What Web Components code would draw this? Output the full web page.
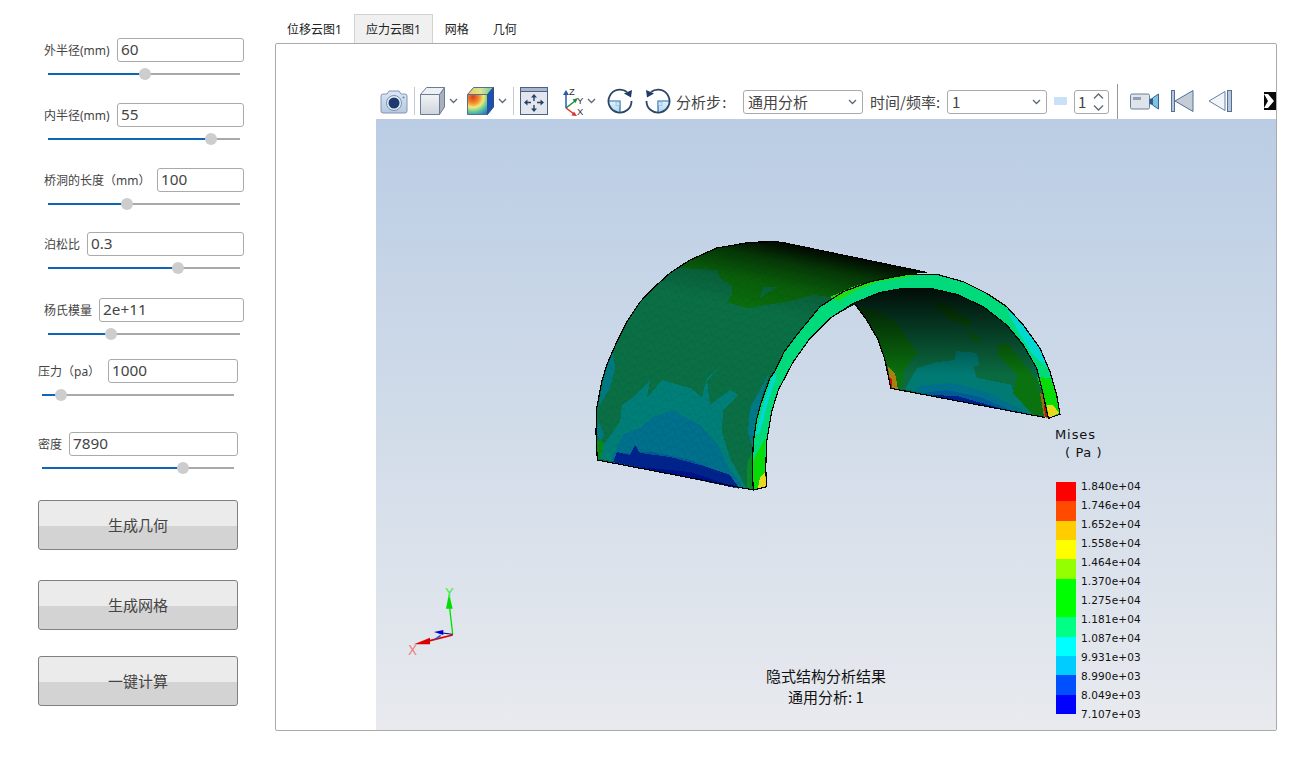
<!DOCTYPE html>
<html lang="zh">
<head>
<meta charset="utf-8">
<title>隐式结构分析</title>
<style>
  html, body { margin: 0; height: 100%; background: #fff; }
  body { font-family: "Noto Sans", "Noto Sans CJK SC", sans-serif; overflow: hidden; }
</style>
</head>
<body>
<app-shell>
  <param-slider style="margin-top:38px;margin-left:44px" label="外半径(mm)" label-width="73" value="60" pos="50.5"></param-slider>
  <param-slider style="margin-top:28px;margin-left:44px" label="内半径(mm)" label-width="73" value="55" pos="85"></param-slider>
  <param-slider style="margin-top:28px;margin-left:44px" label="桥洞的长度（mm）" label-width="113" value="100" pos="41"></param-slider>
  <param-slider style="margin-top:27px;margin-left:44px" label="泊松比" label-width="43" value="0.3" pos="67.7"></param-slider>
  <param-slider style="margin-top:29px;margin-left:44px" label="杨氏模量" label-width="55" value="2e+11" pos="32.8"></param-slider>
  <param-slider style="margin-top:24px;margin-left:38px" label="压力（pa）" label-width="70" value="1000" pos="9.9"></param-slider>
  <param-slider style="margin-top:36px;margin-left:38px" label="密度" label-width="31" value="7890" pos="73.4"></param-slider>
  <action-button style="margin-top:31px">生成几何</action-button>
  <action-button style="margin-top:30px">生成网格</action-button>
  <action-button style="margin-top:26px">一键计算</action-button>
</app-shell>

<script>
// Page frame: parameter column on the left, tabbed result view on the right.
class AppShell extends HTMLElement {
  constructor() {
    super();
    this.attachShadow({ mode: 'open' });
    this.shadowRoot.innerHTML = `
      <style>
        :host { display: flex; width: 1312px; height: 761px; }
        .side { width: 275px; flex: none; display: flex; flex-direction: column; align-items: flex-start; }
        .main { width: 1002px; flex: none; padding-top: 14px; display: flex; flex-direction: column; height: 717px; }
      </style>
      <div class="side"><slot></slot></div>
      <div class="main">
        <tab-bar></tab-bar>
        <result-panel></result-panel>
      </div>
    `;
  }
}

// One labelled number field with the slider below it.
class ParamSlider extends HTMLElement {
  constructor() {
    super();
    this.attachShadow({ mode: 'open' });
  }

  connectedCallback() {
    const label = this.getAttribute('label');
    const value = this.getAttribute('value');
    const pos = this.getAttribute('pos');
    const lw = this.getAttribute('label-width');
    this.shadowRoot.innerHTML = `
      <style>
        :host { display: block; width: 200px; flex: none; color: #444; }
        .row { display: flex; align-items: center; height: 24px; }
        label { flex: none; width: ${lw}px; font-size: 12px; white-space: nowrap; }
        input {
          flex: 1; min-width: 0; box-sizing: border-box; height: 24px; margin: 0;
          border: 1px solid #aaa; border-radius: 3px; padding: 0 3px 2px;
          font: 15.3px "Noto Sans", "Noto Sans CJK SC", sans-serif; color: #444; background: #fff;
        }
        .track { position: relative; height: 2px; margin: 11px 4px 0; background: #a9a9a9; }
        .fill { height: 2px; background: #0f66b8; width: ${pos}%; }
        .thumb {
          position: absolute; left: ${pos}%; top: -5px; width: 12px; height: 12px; margin-left: -6px;
          border-radius: 50%; background: #cdcdcd;
        }
      </style>
      <div class="row"><label>${label}</label><input type="text" value="${value}"></div>
      <div class="track"><div class="fill"></div><div class="thumb"></div></div>
    `;
  }
}

class ActionButton extends HTMLElement {
  constructor() {
    super();
    this.attachShadow({ mode: 'open' });
    this.shadowRoot.innerHTML = `
      <style>
        :host { display: block; flex: none; margin-left: 38px; width: 200px; }
        button {
          display: block; box-sizing: border-box; width: 200px; height: 50px; padding: 0 0 2px;
          border: 1px solid #808080; border-radius: 3px; color: #444;
          font: 15px "Noto Sans CJK SC", "Noto Sans", sans-serif;
          background: linear-gradient(#ebebeb 0, #ebebeb 52%, #d3d3d3 52%, #d3d3d3 100%);
        }
      </style>
      <button><slot></slot></button>
    `;
  }
}

class TabBar extends HTMLElement {
  constructor() {
    super();
    this.attachShadow({ mode: 'open' });
    this.tabs = ['位移云图1', '应力云图1', '网格', '几何'];
    this.shadowRoot.innerHTML = `
      <style>
        :host { display: flex; height: 29px; flex: none; font-size: 12px; color: #222; }
        .tab {
          box-sizing: border-box; height: 30px; padding: 0 11px; line-height: 29px;
          border: 1px solid transparent; white-space: nowrap;
        }
        .tab.on { background: #f0f0f0; border-color: #d2d2d2; border-bottom-color: #aaa; }
      </style>
      ${this.tabs.map((t, i) => `<div class="tab${i === 1 ? ' on' : ''}">${t}</div>`).join('')}
    `;
  }
}

class ResultPanel extends HTMLElement {
  constructor() {
    super();
    this.attachShadow({ mode: 'open' });
    this.shadowRoot.innerHTML = `
      <style>
        :host {
          display: flex; flex-direction: column; flex: 1; min-height: 0; box-sizing: border-box;
          border: 1px solid #aaa; border-radius: 2px; padding: 39px 0 0 100px; background: #fff; overflow: hidden;
        }
        model-view { flex: 1; min-height: 0; }
      </style>
      <view-toolbar></view-toolbar>
      <model-view></model-view>
    `;
  }
}

// Toolbar strip above the 3D view.  It runs past the right edge and is clipped there.
class ViewToolbar extends HTMLElement {
  constructor() {
    super();
    this.attachShadow({ mode: 'open' });
    const chev = (ml) => `<svg style="margin-left:${ml}px" width="9" height="6" viewBox="0 0 9 6"><path d="M1 1l3.5 3.5L8 1" fill="none" stroke="#5a6a7a" stroke-width="1.3"/></svg>`;
    this.shadowRoot.innerHTML = `
      <style>
        :host {
          display: flex; align-items: center; flex: none; height: 36px; width: 900px; overflow: hidden;
          font: 15px "Noto Sans CJK SC", "Noto Sans", sans-serif; color: #444;
        }
        svg { flex: none; display: block; }
        .sep { flex: none; width: 1px; height: 28px; background: #c4ccd4; }
        .sep.tall { height: 35px; background: #999; }
        .txt { flex: none; white-space: nowrap; }
        .sel {
          flex: none; box-sizing: border-box; height: 24px; margin-top: 1px; border: 1px solid #aaa; border-radius: 3px;
          display: flex; align-items: center; justify-content: space-between; padding: 0 5px 0 4px; background: #fff;
        }
        .tiny { flex: none; width: 13px; height: 8px; background: #c8e0f8; border-radius: 1px; }
      </style>
      <svg style="margin-left:4px" width="28" height="25" viewBox="0 0 28 25">
        <defs><linearGradient id="cam" x1="0" y1="0" x2="0" y2="1"><stop offset="0" stop-color="#dce7f4"/><stop offset="1" stop-color="#b4c9e2"/></linearGradient></defs>
        <path d="M3 5h4l2-3h10l2 3h4a2 2 0 0 1 2 2v15a2 2 0 0 1-2 2H3a2 2 0 0 1-2-2V7a2 2 0 0 1 2-2z" fill="url(#cam)" stroke="#8496b0"/>
        <circle cx="14" cy="14" r="7.5" fill="#e8eff7" stroke="#7a90ae"/>
        <circle cx="14" cy="14" r="5.5" fill="#1c3a70"/>
        <circle cx="23.500" cy="8.500" r="1" fill="#6e86a6"/>
      </svg>
      <div class="sep" style="margin-left:6px"></div>
      <svg style="margin-left:5px" width="25" height="28" viewBox="0 0 25 28">
        <defs><linearGradient id="cf" x1="0" y1="0" x2="0" y2="1"><stop offset="0" stop-color="#f2f3f6"/><stop offset="1" stop-color="#cfd4dc"/></linearGradient></defs>
        <path d="M.5 7.500h19v20H.5z" fill="url(#cf)" stroke="#6c7c96"/>
        <path d="M19.500 7.500l5-7v19.500l-5 7.500z" fill="#a8b0bc" stroke="#6c7c96"/>
        <path d="M.5 7.500l6-7h18l-5 7z" fill="#eef0f3" stroke="#6c7c96"/>
      </svg>
      ${chev(4)}
      <svg style="margin-left:9px" width="27" height="28" viewBox="0 0 27 28">
        <defs>
          <radialGradient id="rb" gradientUnits="userSpaceOnUse" cx="6" cy="10" r="21"><stop offset="0" stop-color="#d93a20"/><stop offset="0.3" stop-color="#f0902c"/><stop offset="0.5" stop-color="#f2e878"/><stop offset="0.72" stop-color="#58c8a0"/><stop offset="1" stop-color="#2a70c8"/></radialGradient>
          <linearGradient id="rt" x1="0" y1="0" x2="1" y2="0"><stop offset="0" stop-color="#f0c060"/><stop offset="0.5" stop-color="#d8e890"/><stop offset="1" stop-color="#60c8a0"/></linearGradient>
        </defs>
        <path d="M.5 7.500h20v20H.5z" fill="url(#rb)" stroke="#5a6c90"/>
        <path d="M.5 7.500l6-7h20l-6 7z" fill="url(#rt)" stroke="#5a6c90"/>
        <path d="M20.500 7.500l6-7v19.500l-6 7.500z" fill="#1c50b4" stroke="#33507c"/>
      </svg>
      ${chev(4)}
      <div class="sep" style="margin-left:6px"></div>
      <svg style="margin-left:6px" width="28" height="28" viewBox="0 0 28 28">
        <rect x="0.500" y="0.500" width="27" height="27" fill="#e3e6ec" stroke="#4c6088"/>
        <rect x="0.500" y="0.500" width="27" height="4" fill="#a9b6cc" stroke="#4c6088"/>
        <g fill="#24406c" stroke="#24406c" stroke-width="1.400">
          <path d="M14 10v4M14 18v4M7 15.500h4M17 15.500h4" fill="none"/>
          <path d="M14 7l-3 3.500h6zM14 25l-3-3.500h6zM4 15.500l3.500-3v6zM24 15.500l-3.500-3v6z" stroke="none"/>
        </g>
      </svg>
      <svg style="margin-left:13px" width="24" height="30" viewBox="0 0 24 30">
        <path d="M5 22V8" stroke="#2a5aa8" stroke-width="1.500"/><path d="M5 4l-3 5h6z" fill="#2a5aa8"/>
        <path d="M5 22l9-7" stroke="#1c8a3c" stroke-width="1.500"/><path d="M17 12l-5.500 1.500 3 3.500z" fill="#1c8a3c"/>
        <path d="M5 22l8 6" stroke="#e03030" stroke-width="1.500"/><path d="M16 30l-5.500-.5 2.500-4z" fill="#e03030"/>
        <text x="8" y="9" font-size="9.500" font-family="Liberation Sans" fill="#333">Z</text>
        <text x="16" y="17.500" font-size="9.500" font-family="Liberation Sans" fill="#333">Y</text>
        <text x="16" y="28.500" font-size="9.500" font-family="Liberation Sans" fill="#333">X</text>
      </svg>
      ${chev(2)}
      <svg style="margin-left:11px" width="26" height="26" viewBox="0 0 26 26">
        <defs><linearGradient id="q" x1="0" y1="0" x2="0" y2="1"><stop offset="0" stop-color="#e6f3fb"/><stop offset="1" stop-color="#a8d6f2"/></linearGradient></defs>
        <path d="M1.500 13H13v11.500A11.500 11.500 0 0 1 1.500 13z" fill="url(#q)"/>
        <path d="M1.500 13H13v11.500" fill="none" stroke="#2a6ab0" stroke-width="1.200"/>
        <rect x="9" y="14" width="3.500" height="3.500" fill="#d4e8f6" stroke="#7cb0da" stroke-width=".6"/>
        <path d="M20 4A11.500 11.500 0 1 0 24.500 13" fill="none" stroke="#2c4466" stroke-width="1.800"/>
        <path d="M25 2l-1 7.500-7-4z" fill="#1f3a66"/>
      </svg>
      <svg style="margin-left:12px" width="26" height="26" viewBox="0 0 26 26">
        <path d="M24.500 13H13v11.500A11.500 11.500 0 0 0 24.500 13z" fill="url(#q)"/>
        <path d="M24.500 13H13v11.500" fill="none" stroke="#2a6ab0" stroke-width="1.200"/>
        <rect x="13.500" y="14" width="3.500" height="3.500" fill="#d4e8f6" stroke="#7cb0da" stroke-width=".6"/>
        <path d="M6 4A11.500 11.500 0 1 1 1.500 13" fill="none" stroke="#2c4466" stroke-width="1.800"/>
        <path d="M1 2l1 7.500 7-4z" fill="#1f3a66"/>
      </svg>
      <div class="txt" style="margin-left:5px;width:51px;word-spacing:-2px">分析步 :</div>
      <div class="sel" style="margin-left:16px;width:120px"><span>通用分析</span>${chev(0)}</div>
      <div class="txt" style="margin-left:7px;width:71px">时间/频率:</div>
      <div class="sel" style="margin-left:6px;width:100px"><span>1</span>${chev(0)}</div>
      <div class="tiny" style="margin-left:7px"></div>
      <div class="sel" style="margin-left:7px;width:35px;padding:0 3px 0 3px"><span>1</span>
        <svg width="13" height="20" viewBox="0 0 13 20"><path d="M2 6.500l4.500-4.500L11 6.500M2 13.500L6.500 18l4.500-4.500" fill="none" stroke="#5a6a7a" stroke-width="1.300"/></svg>
      </div>
      <div class="sep tall" style="margin-left:8px"></div>
      <svg style="margin-left:12px" width="29" height="17" viewBox="0 0 29 17">
        <rect x="0.500" y="1" width="19" height="15" rx="1.500" fill="#dfe3ea" stroke="#66809f"/>
        <rect x="3" y="4" width="8" height="3" fill="#93a0b2"/>
        <path d="M19.500 6l3-1v7l-3-1z" fill="#2c5c8c"/>
        <path d="M22.500 5l6-4v15l-6-4z" fill="#7cc4e4" stroke="#33628e"/>
      </svg>
      <svg style="margin-left:12px" width="23" height="22" viewBox="0 0 23 22">
        <rect x="0.500" y="0.500" width="3" height="21" fill="#b8c6d8" stroke="#54709a"/>
        <path d="M22 .5v21L4 11z" fill="#c4ccd6" stroke="#54709a"/>
      </svg>
      <svg style="margin-left:14px" width="24" height="22" viewBox="0 0 24 22">
        <path d="M17 1.500v19L1 11z" fill="#f2f4f7" stroke="#6480a4"/>
        <rect x="19.500" y="0.500" width="4" height="21" fill="#b8c6d8" stroke="#54709a"/>
      </svg>
      <svg style="margin-left:32px;filter:blur(.6px)" width="12" height="18" viewBox="0 0 12 18">
        <path d="M0 0h12v18H0z" fill="#0a0a0a"/>
        <path d="M0 2h4l6 7-6 7H0l4-7z" fill="#fff"/>
      </svg>
    `;
  }
}

// Colour scale of the stress plot.
class ColorLegend extends HTMLElement {
  constructor() {
    super();
    this.attachShadow({ mode: 'open' });
    const bands = [
      ['#ff0000', 1], ['#ff4a00', 1], ['#ffcc00', 1], ['#ffff00', 1], ['#94ff00', 1],
      ['#00ff00', 2], ['#00ff84', 1], ['#00ffff', 1], ['#00ccff', 1], ['#0050ff', 1], ['#0000ff', 1],
    ];
    const labels = ['1.840e+04', '1.746e+04', '1.652e+04', '1.558e+04', '1.464e+04', '1.370e+04', '1.275e+04',
      '1.181e+04', '1.087e+04', '9.931e+03', '8.990e+03', '8.049e+03', '7.107e+03'];
    this.shadowRoot.innerHTML = `
      <style>
        :host { position: absolute; left: 679px; top: 307px; width: 110px; color: #111; font-family: "DejaVu Sans", sans-serif; }
        .name { font-size: 13px; line-height: 18px; letter-spacing: .9px; }
        .unit { font-size: 13px; line-height: 18px; margin-left: 10px; letter-spacing: .6px; }
        .scale { display: flex; margin-top: 20px; margin-left: 1px; }
        .bands { width: 20px; height: 232px; display: flex; flex-direction: column; flex: none; }
        .labels { margin: -5px 0 0 5px; font-size: 10.500px; letter-spacing: .12px; }
        .labels div { height: 19px; line-height: 19px; white-space: nowrap; }
      </style>
      <div class="name">Mises</div>
      <div class="unit">( Pa )</div>
      <div class="scale">
        <div class="bands">${bands.map(([c, n]) => `<div style="background:${c};flex:${n}"></div>`).join('')}</div>
        <div class="labels">${labels.map((l) => `<div>${l}</div>`).join('')}</div>
      </div>
    `;
  }
}

// 3D viewport: the deformed arch is drawn as flat contour polygons traced from the
// plot, in page coordinates (the svg viewBox starts at the viewport's corner).
class ModelView extends HTMLElement {
  constructor() {
    super();
    this.attachShadow({ mode: 'open' });
    const sil = '597.3 460 596 432 596.7 408 601.7 382 606.7 365 616.7 342 626.7 322 640 302 653.3 288 670 273 690 260 716.7 248 750 242.3 776.7 241.7 785 243 927 272.5';
    const outerLeft = '753.3 490 752.3 468 753.3 442 756.5 420 761 403 770 378 775 371 784 352 796.7 335 820 306.7 843.3 291.7 870 281.7 906.7 274.5';
    const outerRight = '936.7 274.3 963.3 281.7 986.7 293.3 1006.7 306.7 1023.3 325 1040 348.3 1050 371.7 1056.7 395 1060 414.3';
    const inner = '1048.3 418.3 1043.3 395 1036.7 368.3 1023.3 345 1006.7 325 983.3 306.7 956.7 294.3 930 288.3 903.3 288.3 880 292.5 853.3 303.3 830 318.3 810 338.3 793.3 361.7 778.3 390 771.7 411.7 766.7 441.7 765.7 468 766.7 486.7';
    const reversed = (s) => {
      const n = s.split(' ');
      const out = [];
      for (let i = n.length - 2; i >= 0; i -= 2) out.push(n[i], n[i + 1]);
      return out.join(' ');
    };
    const skin = `M${sil} L${reversed(outerLeft)}z`;
    const ring = `M${outerLeft} ${outerRight} L${inner}z`;
    const backEdge = '855 304.3 866.7 320 878.3 340 885 360 890.7 388.3 1045 417.5';
    const back = `M${backEdge} L${inner.split(' ').slice(2, 24).join(' ')}z`;
    this.shadowRoot.innerHTML = `
      <style>
        :host { display: block; position: relative; overflow: hidden; background: linear-gradient(#bacde4, #e8eaee); }
        svg { position: absolute; left: 0; top: 0; display: block; }
        .cap {
          position: absolute; left: 350px; width: 200px; top: 546px; text-align: center; color: #111;
          font: 15px/21px "Noto Sans CJK SC", "Noto Sans", sans-serif;
        }
      </style>
      <svg width="900" height="611" viewBox="376 119 900 611">
        <defs>
          <linearGradient id="shO" gradientUnits="userSpaceOnUse" x1="852" y1="257" x2="838" y2="327">
            <stop offset="0" stop-color="#000" stop-opacity=".92"/>
            <stop offset=".25" stop-color="#000" stop-opacity=".5"/>
            <stop offset=".6" stop-color="#000" stop-opacity=".15"/>
            <stop offset="1" stop-color="#000" stop-opacity="0"/>
          </linearGradient>
          <linearGradient id="shI" gradientUnits="userSpaceOnUse" x1="950" y1="288" x2="950" y2="375">
            <stop offset="0" stop-color="#000" stop-opacity=".88"/>
            <stop offset="1" stop-color="#000" stop-opacity="0"/>
          </linearGradient>
          <pattern id="mesh" patternUnits="userSpaceOnUse" width="13" height="9" patternTransform="rotate(12)">
            <path d="M0 9L6.500 0L13 9M0 0h13" fill="none" stroke="#000" stroke-opacity=".08" stroke-width=".8"/>
          </pattern>
        </defs>
        <g shape-rendering="crispEdges">
          <!-- far half, seen through the arch -->
          <path d="${back}" fill="#0a6a40"/>
          <path d="M858 307L880 312L897 323L917 353L903 372L903 387L891 388L887 368L878 340z" fill="#0a720e"/>
          <path d="M997 345L1007 343L1023 362L1037 382L1045 415L1033 415L1013 395L1017 375L998 355z" fill="#0a720e"/>
          <path d="M932 302L947 305L973 322L967 327L947 318z" fill="#0a720e"/>
          <path d="M968 332L980 338L980 343L970 338z" fill="#0a720e"/>
          <path d="M905 389L917 368L937 362L955 360L956 351L977 353L979 365L973 367L977 378L1012 385L1013 393L1033 415z" fill="#007a72"/>
          <path d="M912 391L923 385L953 383L990 393L1027 413z" fill="#00708a"/>
          <path d="M920 393L947 390L980 397L1013 411z" fill="#005a96"/>
          <path d="M930 395L957 396L1003 409z" fill="#00208c"/>
          <path d="${back}" fill="url(#shI)"/>
          <path d="M888 367L895 373L898 389.500L891 388z" fill="#a88010"/>
          <path d="M889 377L892 380L892 388L891 388z" fill="#c01010"/>
          <path d="M1040 393L1045 395L1048 418L1044 417z" fill="#8c7010"/>
          <path d="M1044 405L1046 407L1047 417L1045 417z" fill="#c01010"/>

          <!-- outer skin of the shell -->
          <path d="${skin}" fill="#0a6f44"/>
          <path d="M680 268L717 270L720 278L732 285L732 295L727 302L747 308L786 302L813 295L837 298L870 281.700L906.700 274.500L927 272.500L785 243L750 242.300L716.700 248L690 260z" fill="#0a6e0c"/>
          <path d="M763 287L777 287L760 298z" fill="#0a6f44"/>
          <path d="M597 458L598 440L605 443L620 422L622 405L632 398L650 380L647 398L662 380L690 388L702 397L707 378L717 370L707 380L710 405L730 390L738 395L723 410L722 432L730 458L747 489z" fill="#007f78"/>
          <path d="M598 408L603 382L607 367L613 353L615 368L610 388z" fill="#007a82"/>
          <path d="M598 420L604 435L600 442L597 432z" fill="#007a82"/>
          <path d="M748 432L750 408L770 372L763 392L755 422L753 448z" fill="#007a88"/>
          <path d="M610 462L623 435L640 428L653 417L672 410L700 425L718 445L730 470L745 489z" fill="#00708c"/>
          <path d="M613 462L620 453L650 452L690 460L723 473L740 489z" fill="#005a96"/>
          <path d="M613 462L617 452L630 455L635 445L640 453L670 457L700 465L730 475L739 488z" fill="#00248c"/>
          <path d="M640 467L690 472L723 483L735 488z" fill="#00108a"/>
          <path d="M597.300 460L596.500 440L604 442L602 455z" fill="#0a8a18"/>
          <path d="M747 464L752 452L752.300 490L747 489z" fill="#0a8a28"/>
          <path d="${skin}" fill="url(#mesh)"/>
          <path d="${skin}" fill="url(#shO)"/>

          <!-- front ring -->
          <path d="${ring}" fill="#00da7a"/>
          <path d="M830 297L850 288L870 281L907 274.500L927 274L907 277L877 282L857 290L838 301z" fill="#20dc10"/>
          <path d="M755.700 435L763 405L773 375L777 375L768 402L760 432z" fill="#00d8d0"/>
          <path d="M1007 310L1023 325L1040 348L1047 367L1033 355L1020 335z" fill="#00d8d0"/>
          <path d="M753.300 490L752.500 462L765 438L765.700 468L766.700 486.700z" fill="#08dc08"/>
          <path d="M1037 377L1050 378L1056.700 395L1060 414.300L1048.300 418.300L1043.300 395z" fill="#08dc08"/>
          <path d="M758 488L760 477L765 473L766.700 486.700z" fill="#e8d820"/>
          <path d="M1047 405L1053 405L1059 413L1048.300 418.300z" fill="#e8d820"/>

          <!-- edges -->
          <g fill="none" stroke="#000" stroke-width="1.200" stroke-linejoin="round">
            <path d="M753.300 490L${sil}"/>
            <path d="${ring}"/>
            <path d="M${backEdge}"/>
          </g>
        </g>
        <!-- triad -->
        <g transform="translate(390 570) scale(.33333)">
          <path d="M188 192L178 105" stroke="#00e000" stroke-width="4"/>
          <path d="M177 70L168 116L188 116z" fill="#00dd00"/>
          <path d="M188 195L120 212" stroke="#e00000" stroke-width="5"/>
          <path d="M72 223L120 203L120 223z" fill="#dd0000"/>
          <path d="M188 193L150 188" stroke="#000080" stroke-width="3"/>
          <path d="M132 186L160 180L160 195z" fill="#0000cc"/>
          <path d="M135 208L152 196" stroke="#3050e0" stroke-width="5"/>
          <text x="166" y="84" font-size="40" font-family="DejaVu Sans" fill="#44f044">Y</text>
          <text x="54" y="255" font-size="40" font-family="DejaVu Sans" fill="#f08080">X</text>
        </g>
      </svg>
      <color-legend></color-legend>
      <div class="cap"><div>隐式结构分析结果</div><div>通用分析: 1</div></div>
    `;
  }
}

customElements.define('color-legend', ColorLegend);
customElements.define('model-view', ModelView);
customElements.define('view-toolbar', ViewToolbar);
customElements.define('result-panel', ResultPanel);
customElements.define('tab-bar', TabBar);
customElements.define('action-button', ActionButton);
customElements.define('param-slider', ParamSlider);
customElements.define('app-shell', AppShell);
</script>
</body>
</html>
